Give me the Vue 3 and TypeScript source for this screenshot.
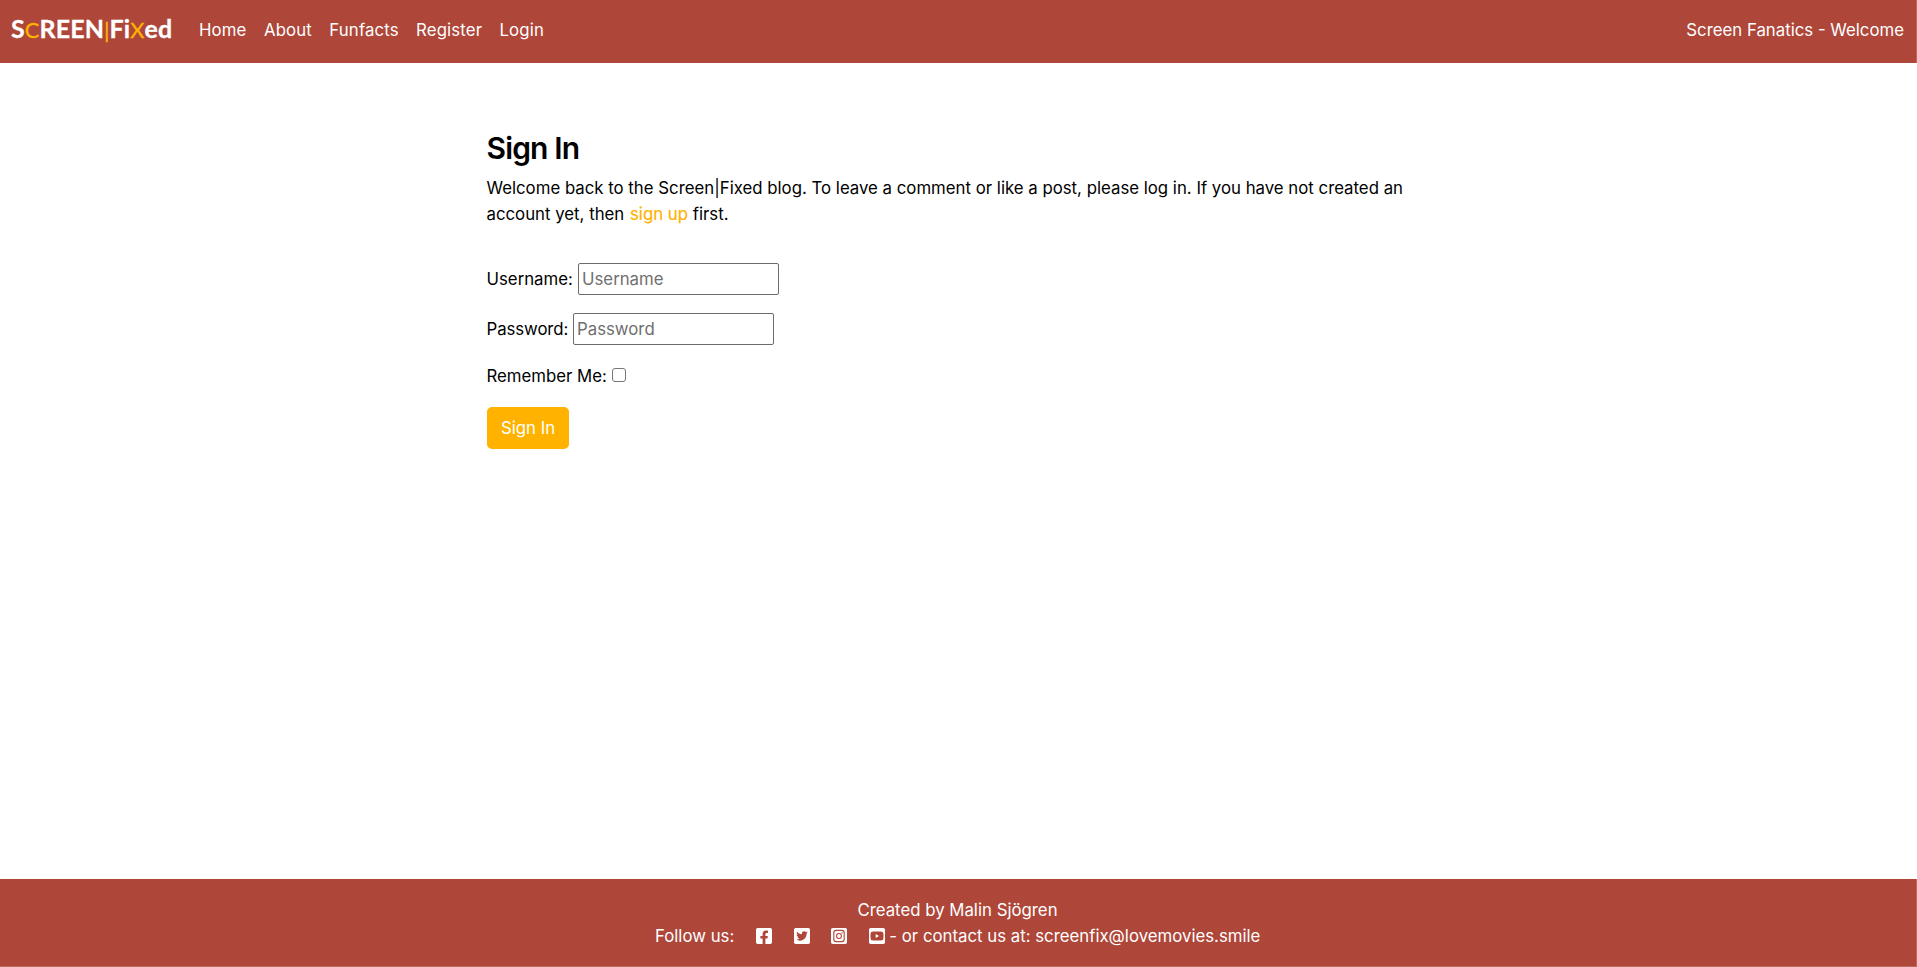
<script setup lang="ts">
import { ref } from 'vue'

interface SocialIcon {
  name: string
  path: string
}

const navLinks: string[] = ['Home', 'About', 'Funfacts', 'Register', 'Login']

const socials: SocialIcon[] = [
  {
    name: 'Facebook',
    path: 'M400 32H48A48 48 0 0 0 0 80v352a48 48 0 0 0 48 48h137.25V327.69h-63V256h63v-54.64c0-62.15 37-96.48 93.67-96.48 27.14 0 55.52 4.84 55.52 4.84v61h-31.27c-30.81 0-40.42 19.12-40.42 38.73V256h68.78l-11 71.69h-57.78V480H400a48 48 0 0 0 48-48V80a48 48 0 0 0-48-48z',
  },
  {
    name: 'Twitter',
    path: 'M400 32H48C21.5 32 0 53.5 0 80v352c0 26.5 21.5 48 48 48h352c26.5 0 48-21.5 48-48V80c0-26.5-21.5-48-48-48zm-48.9 158.8c.2 2.8.2 5.7.2 8.5 0 86.7-66 186.6-186.6 186.6-37.2 0-71.7-10.8-100.7-29.4 5.3.6 10.4.8 15.8.8 30.7 0 58.9-10.4 81.4-28-28.8-.6-53-19.5-61.3-45.5 10.1 1.5 19.2 1.5 29.6-1.2-30-6.1-52.5-32.5-52.5-64.4v-.8c8.7 4.9 18.9 7.9 29.6 8.3a65.447 65.447 0 0 1-29.2-54.6c0-12.2 3.2-23.4 8.9-33.1 32.3 39.8 80.8 65.8 135.2 68.6-9.3-44.5 24-80.6 64-80.6 18.9 0 35.9 7.9 47.9 20.7 14.8-2.8 29-8.3 41.6-15.8-4.9 15.2-15.2 28-28.8 36.1 13.2-1.4 26-5.1 37.8-10.2-8.9 13.1-20.1 24.7-32.9 34z',
  },
  {
    name: 'Instagram',
    path: 'M48 32h352a48 48 0 0 1 48 48v352a48 48 0 0 1-48 48H48a48 48 0 0 1-48-48V80a48 48 0 0 1 48-48zM144 83a81 81 0 0 0-81 81v184a81 81 0 0 0 81 81h160a81 81 0 0 0 81-81V164a81 81 0 0 0-81-81zM144 114h160a50 50 0 0 1 50 50v184a50 50 0 0 1-50 50H144a50 50 0 0 1-50-50V164a50 50 0 0 1 50-50zM224 173a83 83 0 1 0 0 166 83 83 0 1 0 0-166zM224 203a53 53 0 1 1 0 106 53 53 0 1 1 0-106zM310 151a19 19 0 1 0 0 38 19 19 0 1 0 0-38z',
  },
  {
    name: 'YouTube',
    path: 'M186.8 202.1l95.2 54.1-95.2 54.1V202.1zM448 80v352c0 26.5-21.5 48-48 48H48c-26.5 0-48-21.5-48-48V80c0-26.5 21.5-48 48-48h352c26.5 0 48 21.5 48 48zm-42 176.3s0-59.6-7.6-88.2c-4.2-15.8-16.5-28.2-32.2-32.4C337.9 128 224 128 224 128s-113.9 0-142.2 7.7c-15.7 4.2-28 16.6-32.2 32.4-7.6 28.5-7.6 88.2-7.6 88.2s0 59.6 7.6 88.2c4.2 15.8 16.5 27.7 32.2 31.9C110.1 384 224 384 224 384s113.9 0 142.2-7.7c15.7-4.2 28-16.1 32.2-31.9 7.6-28.5 7.6-88.1 7.6-88.1z',
  },
]

const username = ref<string>('')
const password = ref<string>('')
const remember = ref<boolean>(false)
</script>

<template>
  <div class="page">
    <header class="navbar">
      <a class="brand">S<span>C</span>REEN<span>|</span>Fi<span>X</span>ed</a>
      <nav class="links">
        <a v-for="link in navLinks" :key="link">{{ link }}</a>
      </nav>
      <div class="welcome">Screen Fanatics - Welcome</div>
    </header>

    <main class="content">
      <h1>Sign In</h1>
      <p class="intro">
        Welcome back to the Screen|Fixed blog. To leave a comment or like a post, please log in. If you have not created an<br />
        account yet, then <a>sign up</a> first.
      </p>
      <form @submit.prevent>
        <div class="field username">
          <label for="username">Username:</label>
          <input id="username" v-model="username" type="text" placeholder="Username" />
        </div>
        <div class="field password">
          <label for="password">Password:</label>
          <input id="password" v-model="password" type="password" placeholder="Password" />
        </div>
        <div class="field remember">
          <label for="remember">Remember Me:</label>
          <input id="remember" v-model="remember" type="checkbox" />
        </div>
        <button type="submit">Sign In</button>
      </form>
    </main>

    <footer class="footer">
      <div class="credit">Created by Malin Sjögren</div>
      <div class="follow">
        <span class="follow-label">Follow us:</span>
        <a v-for="s in socials" :key="s.name" class="social" :aria-label="s.name">
          <svg viewBox="0 32 448 448"><path :d="s.path" fill="currentColor" fill-rule="evenodd" /></svg>
        </a>
        <span class="contact">- or contact us at: screenfix@lovemovies.smile</span>
      </div>
    </footer>
  </div>
</template>

<style>
body {
  margin: 0;
  background: #fff;
}
</style>

<style scoped>
.page {
  display: flex;
  flex-direction: column;
  height: 967px;
  overflow: hidden;
  color: #000;
  font-family: Inter, "Liberation Sans", sans-serif;
  font-size: 16.8px;
  line-height: 26px;
}

.navbar {
  box-sizing: border-box;
  display: flex;
  align-items: flex-start;
  height: 63px;
  padding: 17px 12px 0 11px;
  background: #ae4639;
  border-right: 1px solid #bd695e;
  color: #fff;
}

.brand {
  flex: 0 0 188px;
  margin-top: -2px;
  font-family: Lato, sans-serif;
  font-size: 25px;
  font-weight: 700;
  letter-spacing: 0.1px;
  white-space: nowrap;
  -webkit-text-stroke: 0.3px currentColor;
}

.brand span {
  color: #ffb300;
  font-size: 21.8px;
  font-weight: 400;
}

.links {
  display: flex;
  gap: 17.4px;
  letter-spacing: 0.13px;
}

.welcome {
  margin-left: auto;
}

.content {
  flex: 1;
  box-sizing: border-box;
  width: 943.5px;
  padding-top: 66px;
  margin-left: 486.5px;
}

h1 {
  margin: 0;
  font-size: 30px;
  font-weight: 600;
  letter-spacing: -0.85px;
  line-height: 38px;
}

.intro {
  margin: 8px 0 36px;
  white-space: nowrap;
}

.intro a {
  color: #ffb300;
  -webkit-text-stroke: 0.2px currentColor;
  margin-left: 1px;
}

.field {
  display: flex;
  align-items: center;
  height: 32px;
  margin-bottom: 18px;
}

.field label {
  white-space: nowrap;
}

.username label {
  width: 91.5px;
}

.password label {
  width: 86.5px;
  letter-spacing: -0.08px;
}

.field input:not([type="checkbox"]) {
  box-sizing: border-box;
  width: 201px;
  height: 32px;
  padding: 1px 3px;
  border: 1px solid #6b6b6b;
  border-radius: 2px;
  background: #fff;
  font: inherit;
  letter-spacing: inherit;
}

.field input::placeholder {
  color: #6f6f6f;
}

.remember {
  height: 26px;
  margin-bottom: 18px;
}

.remember label {
  width: 125.5px;
}

.remember input {
  box-sizing: border-box;
  width: 14px;
  height: 14px;
  margin: 0 0 3px;
  border: 1px solid #767676;
  border-radius: 3px;
  appearance: none;
}

button {
  width: 82px;
  height: 42px;
  margin-left: 0.5px;
  padding: 0;
  border: 0;
  border-radius: 5px;
  background: #ffb300;
  color: #fff;
  font: inherit;
  letter-spacing: inherit;
}

.footer {
  box-sizing: border-box;
  height: 88px;
  padding-top: 18px;
  background: #ae4639;
  border-right: 1px solid #bd695e;
  border-bottom: 1px solid #bd695e;
  color: #fff;
  text-align: center;
}

.credit {
  padding-right: 1px;
}

.follow {
  display: flex;
  align-items: center;
  padding-left: 655px;
  white-space: nowrap;
}

.follow-label {
  width: 101px;
  text-align: left;
}

.social {
  display: flex;
  margin-right: 21.7px;
}

.social svg {
  width: 16px;
  height: 16px;
}

.social:nth-of-type(4) {
  margin-right: 4.3px;
}
</style>
